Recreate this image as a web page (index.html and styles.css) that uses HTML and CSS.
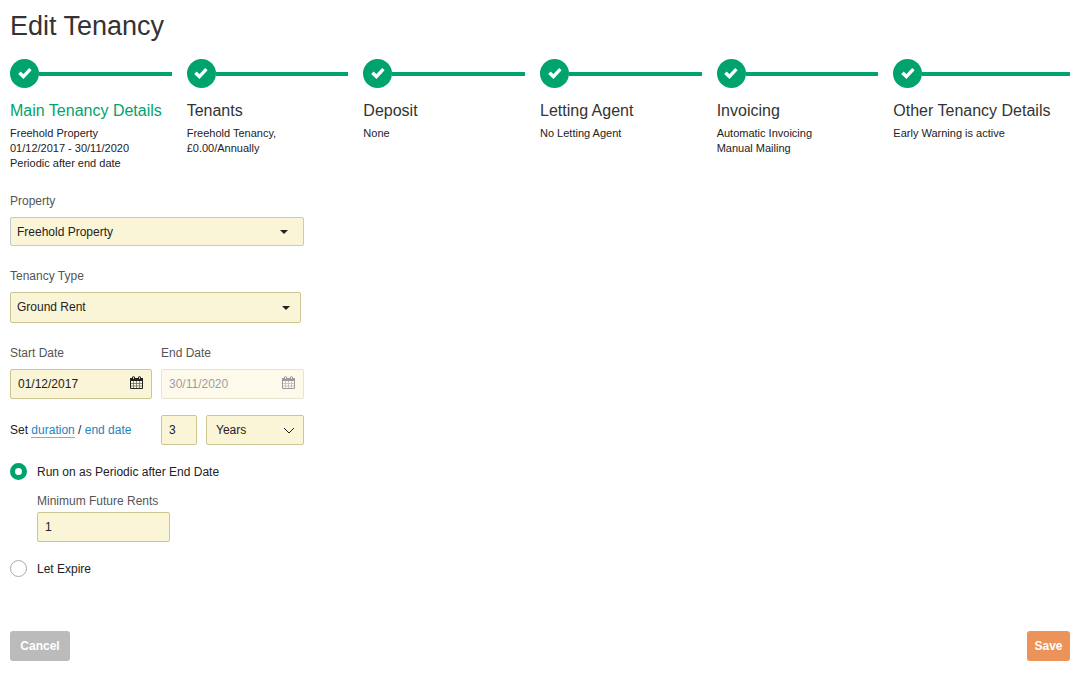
FILE: index.html
```html
<!DOCTYPE html>
<html lang="en">
<head>
    <meta charset="UTF-8">
    <meta name="viewport" content="width=device-width, initial-scale=1.0">
    <title>Edit Tenancy</title>
    <link rel="stylesheet" href="styles.css">
</head>
<body>

<!-- shared icons -->
<svg class="sprite" aria-hidden="true">
    <symbol id="tick" viewBox="0 0 16 14">
        <path d="M2.4 5.8 L6.4 9.6 L13.4 2.2" fill="none" stroke="currentColor" stroke-width="3.4"/>
    </symbol>
    <symbol id="caret" viewBox="0 0 8 4">
        <path d="M0 0 H8 L4 4 Z" fill="currentColor"/>
    </symbol>
    <symbol id="chevron" viewBox="0 0 12 7">
        <path d="M1 1 L6 6 L11 1" fill="none" stroke="currentColor" stroke-width="1"/>
    </symbol>
    <symbol id="calendar" viewBox="0 0 13 13">
        <path d="M0 2 H13 V5 H0 Z" fill="currentColor"/>
        <path d="M0.5 4.5 V12.5 H12.5 V4.5" fill="none" stroke="currentColor"/>
        <path d="M3.5 5 V12 M6.5 5 V12 M9.5 5 V12 M1 7.5 H12 M1 10 H12" stroke="currentColor" stroke-width="0.7" opacity="0.7"/>
        <path d="M2 1 Q3.5 -0.5 5 1 V3 H2 Z M8 1 Q9.5 -0.5 11 1 V3 H8 Z" fill="currentColor"/>
        <path d="M3.5 1 V3 M9.5 1 V3" stroke="#fbf5d7" stroke-width="0.8"/>
    </symbol>
</svg>

<div class="page">
    <h1>Edit Tenancy</h1>

    <ol class="steps">
        <li class="step active">
            <div class="track"><span class="dot"><svg><use href="#tick"/></svg></span></div>
            <h2>Main Tenancy Details</h2>
            <p>Freehold Property<br>01/12/2017 - 30/11/2020<br>Periodic after end date</p>
        </li>
        <li class="step">
            <div class="track"><span class="dot"><svg><use href="#tick"/></svg></span></div>
            <h2>Tenants</h2>
            <p>Freehold Tenancy,<br>£0.00/Annually</p>
        </li>
        <li class="step">
            <div class="track"><span class="dot"><svg><use href="#tick"/></svg></span></div>
            <h2>Deposit</h2>
            <p>None</p>
        </li>
        <li class="step">
            <div class="track"><span class="dot"><svg><use href="#tick"/></svg></span></div>
            <h2>Letting Agent</h2>
            <p>No Letting Agent</p>
        </li>
        <li class="step">
            <div class="track"><span class="dot"><svg><use href="#tick"/></svg></span></div>
            <h2>Invoicing</h2>
            <p>Automatic Invoicing<br>Manual Mailing</p>
        </li>
        <li class="step">
            <div class="track"><span class="dot"><svg><use href="#tick"/></svg></span></div>
            <h2>Other Tenancy Details</h2>
            <p>Early Warning is active</p>
        </li>
    </ol>

    <form>
        <div class="fields">
            <div class="field">
                <label for="property">Property</label>
                <div class="control property">
                    <select id="property">
                        <option>Freehold Property</option>
                    </select>
                    <svg class="caret"><use href="#caret"/></svg>
                </div>
            </div>

            <div class="field">
                <label for="tenancy_type">Tenancy Type</label>
                <div class="control type">
                    <select id="tenancy_type">
                        <option>Ground Rent</option>
                    </select>
                    <svg class="caret"><use href="#caret"/></svg>
                </div>
            </div>

            <div class="row">
                <div class="field">
                    <label for="start_date">Start Date</label>
                    <div class="control">
                        <input type="text" id="start_date" value="01/12/2017">
                        <svg class="calendar"><use href="#calendar"/></svg>
                    </div>
                </div>
                <div class="field">
                    <label for="end_date">End Date</label>
                    <div class="control disabled">
                        <input type="text" id="end_date" value="30/11/2020" disabled>
                        <svg class="calendar"><use href="#calendar"/></svg>
                    </div>
                </div>
            </div>

            <div class="row term">
                <div class="mode">Set <a href="#" class="current">duration</a> / <a href="#">end date</a></div>
                <div class="duration">
                    <input type="text" value="3" aria-label="Duration">
                    <div class="control">
                        <select aria-label="Duration unit">
                            <option>Years</option>
                        </select>
                        <svg class="chevron"><use href="#chevron"/></svg>
                    </div>
                </div>
            </div>

            <label class="option">
                <input type="radio" name="after_end" checked>
                Run on as Periodic after End Date
            </label>
            <div class="field minimum">
                <label for="min_rents">Minimum Future Rents</label>
                <input type="text" id="min_rents" value="1">
            </div>
            <label class="option">
                <input type="radio" name="after_end">
                Let Expire
            </label>
        </div>

        <div class="buttons">
            <button type="button" class="cancel">Cancel</button>
            <button type="submit" class="save">Save</button>
        </div>
    </form>
</div>

</body>
</html>
```
FILE: styles.css
```css
* {
    box-sizing: border-box;
}
body {
    margin: 0;
    font-family: "Liberation Sans", Arial, sans-serif;
    font-size: 12px;
    line-height: 16px;
    color: #222;
    background-color: white;
}
.sprite {
    display: none;
}
.page {
    padding: 9px 15px 19px 10px;
}
h1 {
    margin: 0 0 16px;
    font-size: 27px;
    line-height: 34px;
    font-weight: normal;
    color: #333;
}

/* progress steps */
.steps {
    display: grid;
    grid-template-columns: repeat(6, 1fr);
    min-height: 112px;
    margin: 0 0 22px;
    padding: 0;
    list-style: none;
}
.track {
    display: flex;
    align-items: center;
    margin-right: 15px;
}
.step:last-child .track {
    margin-right: 0;
}
.track::after {
    content: "";
    flex: 1;
    height: 4px;
    background-color: #00a36d;
}
.dot {
    display: flex;
    align-items: center;
    justify-content: center;
    width: 29px;
    height: 29px;
    border-radius: 50%;
    background-color: #00a36d;
    color: white;
}
.dot svg {
    width: 16px;
    height: 14px;
}
.step h2 {
    margin: 13px 0 5px;
    font-size: 16px;
    line-height: 20px;
    font-weight: normal;
    color: #333;
}
.step.active h2 {
    color: #00a36d;
}
.step p {
    margin: 0;
    font-size: 11px;
    line-height: 15px;
}

/* form */
.fields {
    max-width: 294px;
}
.field {
    margin-bottom: 22px;
}
.field label {
    display: block;
    margin-bottom: 8px;
    color: #555;
}
input[type="text"],
select {
    display: block;
    width: 100%;
    height: 30px;
    margin: 0;
    padding: 0 7px;
    border: 1px solid #cbc692;
    border-radius: 2px;
    background-color: #fbf5d7;
    color: #222;
    font: inherit;
    appearance: none;
}
select {
    padding: 0 6px;
}
.control {
    position: relative;
}
.control svg {
    position: absolute;
    top: 0;
    bottom: 0;
    right: 16px;
    margin: auto 0;
    pointer-events: none;
}
.control .caret {
    width: 8px;
    height: 4px;
}
.control .calendar {
    width: 13px;
    height: 13px;
    bottom: 3px;
    right: 9px;
}
.control .chevron {
    width: 12px;
    height: 7px;
    right: 9px;
}
.property select {
    border-color: #c8c8c8;
    height: 29px;
}
.type {
    margin-right: 3px;
}
.type select {
    height: 31px;
    padding-bottom: 2px;
}
.control.type .caret {
    right: 11px;
}
.disabled {
    opacity: 0.45;
}
.row {
    display: grid;
    grid-template-columns: 142px 1fr;
    gap: 9px;
}
.row .field {
    margin-bottom: 16px;
}
.term {
    align-items: center;
    margin-bottom: 18px;
}
.duration {
    display: grid;
    grid-template-columns: 36px 1fr;
    gap: 9px;
}
.duration select {
    padding: 0 9px;
}
a {
    color: #1c84c0;
    text-decoration: none;
}
a:hover {
    text-decoration: underline;
}
.current {
    border-bottom: 1px solid #ec9359;
}
.option {
    display: flex;
    align-items: center;
    gap: 10px;
}
.option input {
    width: 17px;
    height: 17px;
    margin: 0;
    border: 1px solid #aaa;
    border-radius: 50%;
    background-color: white;
    appearance: none;
}
.option input:checked {
    border: 5px solid #00a36d;
}
.minimum {
    width: 133px;
    margin: 13px 0 18px 27px;
}
.minimum label {
    margin-bottom: 3px;
}
.buttons {
    display: flex;
    justify-content: space-between;
    margin-top: 54px;
}
button {
    height: 30px;
    padding: 0 8px;
    border: 0;
    border-radius: 3px;
    color: white;
    font: bold 12px "Liberation Sans", Arial, sans-serif;
    cursor: pointer;
}
.cancel {
    min-width: 60px;
    background-color: #bbb;
}
.save {
    min-width: 43px;
    padding: 0 6px;
    background-color: #ec9359;
}
```
